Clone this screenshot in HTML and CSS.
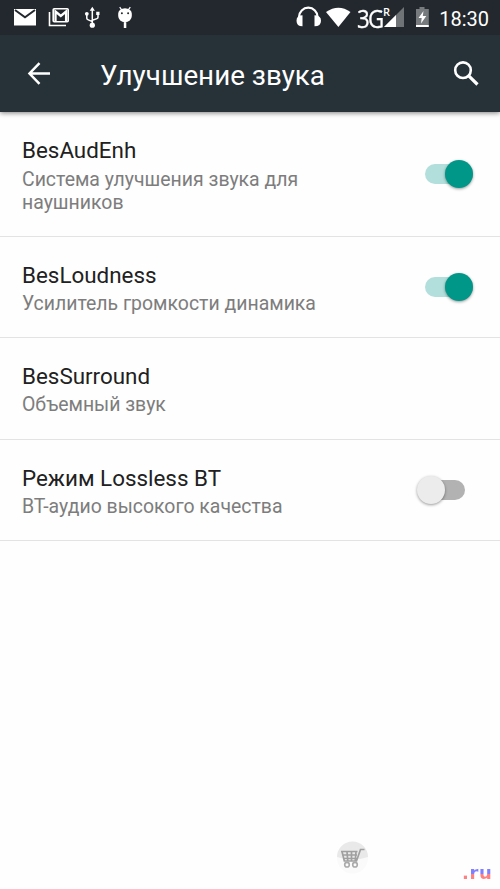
FILE: index.html
```html
<!DOCTYPE html>
<html lang="ru">
<head>
<meta charset="utf-8">
<title>Улучшение звука</title>
<link rel="stylesheet" href="styles.css">
</head>
<body>
<div class="status">
  <div class="notifications">
    <svg width="22" height="35" viewBox="14 0 22 35"><path fill="#fff" d="M14 9h22v16.500H14z"/><path d="M15 10l10 7.300 10-7.300" fill="none" stroke="#22282d" stroke-width="2"/></svg>
    <svg width="22" height="35" viewBox="48 0 22 35"><path d="M49.500 12v13.500H66" fill="none" stroke="#fff" stroke-width="1.600"/><rect x="53.200" y="8.800" width="15" height="13" rx="1" fill="none" stroke="#fff" stroke-width="1.600"/><path d="M55.500 21.500v-10l5.300 4.500 5.300-4.500v10" fill="none" stroke="#fff" stroke-width="2.300"/></svg>
    <svg width="16" height="35" viewBox="84 0 16 35"><path d="M92.300 9v16M86.800 14v4.300q0 1 1 1.300l4.500 2M98 13.500v3.800q0 1-1 1.300l-4.700 1.600" fill="none" stroke="#fff" stroke-width="1.500"/><path d="M92.300 6.800l2.600 4h-5.200zM96.200 11.800h3.300v3.300h-3.300z" fill="#fff"/><circle cx="86.800" cy="13.800" r="1.900" fill="#fff"/><circle cx="92.300" cy="25.200" r="2.600" fill="#fff"/></svg>
    <svg width="16" height="35" viewBox="117 0 16 35"><path d="M118.200 13.500a6.800 5.200 0 0 1 13.600 0v2.500a6.800 6.200 0 0 1-13.600 0zM123.800 22h2.500v6h-2.500z" fill="#fff"/><path d="M119.700 7.200l2.200 3M130.300 7.200l-2.200 3" stroke="#fff" stroke-width="1.200"/><circle cx="121.900" cy="13.300" r="1" fill="#22282d"/><circle cx="128.100" cy="13.300" r="1" fill="#22282d"/></svg>
  </div>
  <div class="system">
    <svg width="26" height="35" viewBox="296 0 26 35"><path d="M299 17.500v-.500a9.300 9.300 0 0 1 18.600 0v.5" fill="none" stroke="#fff" stroke-width="2.200"/><path d="M302.500 15.200v11q-6 0-6-5.500t6-5.500zM314.500 15.200v11q6.500 0 6.500-5.500t-6.500-5.500z" fill="#fff"/></svg>
    <svg width="25" height="35" viewBox="326 0 25 35"><path d="M326 12q12.500-8.500 24.500 0L338.400 27z" fill="#fff"/></svg>
    <div class="network"><span class="generation">3G</span><span class="roaming">R</span></div>
    <svg class="signal" width="20" height="35" viewBox="385 0 20 35"><path d="M405 7v20h-20z" fill="#6f7376"/><path d="M397 15v12h-12z" fill="#fff"/></svg>
    <svg width="14" height="35" viewBox="416 0 14 35"><path d="M417 9h3.500V7h5v2h4.300v16H417z" fill="#777b7e"/><path d="M417 25h12.800v2H417zM424.500 11l-5 7h3.200l-.700 5.500 5.300-7.500h-3.500z" fill="#fff"/></svg>
    <time class="clock">18:30</time>
  </div>
</div>
<header class="appbar">
  <svg width="24" height="24" viewBox="27 62 24 24"><path d="M50 73.500H30M39.500 63.200L29.500 73.500l10 10.300" fill="none" stroke="#fff" stroke-width="2.500"/></svg>
  <h1>Улучшение звука</h1>
  <svg class="search" width="26" height="26" viewBox="453 60 26 26"><circle cx="463" cy="70.200" r="7.800" fill="none" stroke="#fff" stroke-width="2.600"/><path d="M468.500 75.700l9 8.800" fill="none" stroke="#fff" stroke-width="3.200"/></svg>
</header>
<main>
  <section class="row tall">
    <div class="label"><h2>BesAudEnh</h2><p>Система улучшения звука для наушников</p></div>
    <div class="switch on"><i></i></div>
  </section>
  <section class="row">
    <div class="label"><h2>BesLoudness</h2><p>Усилитель громкости динамика</p></div>
    <div class="switch on"><i></i></div>
  </section>
  <section class="row">
    <div class="label"><h2>BesSurround</h2><p>Объемный звук</p></div>
  </section>
  <section class="row">
    <div class="label"><h2>Режим Lossless BT</h2><p>ВТ-аудио высокого качества</p></div>
    <div class="switch"><i></i></div>
  </section>
</main>
<footer>
  <svg class="cart" width="34" height="34" viewBox="336 841 34 34"><circle cx="352.500" cy="858" r="15.500" fill="#fafafa"/><path d="M337 857a15.500 15.500 0 0 1 31 0q-15.500 5-31 0z" fill="#e9e9e9"/><path d="M341 851.500h16.500M342.500 855h14.500M343.500 858.500h13M342 851.500l2.300 9.500h12.200l4-11.500h4M347 852l.8 9M351.500 852v9M356 852l-.8 9" fill="none" stroke="#a0a0a0" stroke-width="1.700"/><circle cx="347" cy="864.700" r="2.300" fill="#fafafa" stroke="#aaa" stroke-width="1.600"/><circle cx="355" cy="864.700" r="2.300" fill="#fafafa" stroke="#aaa" stroke-width="1.600"/></svg>
  <span class="domain">.ru</span>
</footer>
</body>
</html>
```

FILE: styles.css
```css
* { box-sizing: border-box; }
body {
  margin: 0;
  height: 889px;
  display: flex;
  flex-direction: column;
  overflow: hidden;
  background: #fefefe;
  color: #212121;
  font-family: Roboto, sans-serif;
}
svg { display: block; flex: none; }
h1, h2, p { margin: 0; font-weight: 400; }
.status {
  position: relative;
  z-index: 1;
  display: flex;
  justify-content: space-between;
  flex: none;
  height: 35px;
  padding: 0 11px 0 14px;
  background: #22282d;
  color: #fff;
}
.notifications { display: flex; }
.notifications svg:nth-child(2) { margin-left: 12px; }
.notifications svg:nth-child(3) { margin-left: 14px; }
.notifications svg:nth-child(4) { margin-left: 17px; }
.system { display: flex; width: 193px; }
.system svg:nth-child(2) { margin-left: 4px; }
.network { display: flex; width: 34px; margin-left: 6px; white-space: nowrap; }
.generation {
  width: 26px;
  font: 25px/36px "Open Sans", sans-serif;
  letter-spacing: -1.8px;
  transform: scaleX(.89);
  transform-origin: left;
  -webkit-text-stroke: .3px #fff;
}
.roaming { font: 600 11px/23px "Open Sans", sans-serif; }
.signal { margin-left: -6px; }
.signal + svg { margin-left: 11px; }
.clock { margin-left: 10px; font-size: 20px; line-height: 38px; }
.appbar {
  display: flex;
  align-items: center;
  flex: none;
  height: 77px;
  padding: 0 21px 0 27px;
  background: #263238;
  color: #fff;
  box-shadow: 0 1px 5px rgba(0, 0, 0, .5);
}
.appbar h1 { margin: 4px auto 0 49px; font-size: 27.8px; line-height: 36px; }
.search { margin-top: -1px; }
.row {
  display: flex;
  justify-content: space-between;
  height: 101.300px;
  padding: 25px 23px 0 22px;
  border-bottom: 1px solid #e3e3e3;
}
.row.tall { height: 125px; }
.label { width: 310px; }
.row h2 { font-size: 22.4px; line-height: 27px; }
.row p { margin-top: 3px; color: #7d7d7d; font-size: 19.45px; line-height: 23px; }
.tall p { margin-top: 4px; }
.switch {
  display: flex;
  align-items: center;
  width: 48px;
  height: 20px;
  margin: 15px 12px 0 0;
  border-radius: 10px;
  background: linear-gradient(#b2b2b2, #b2b2b2) right / 28px 20px no-repeat;
}
.switch i {
  width: 28px;
  height: 28px;
  border-radius: 50%;
  background: #ececec;
  box-shadow: 0 1px 3px rgba(0, 0, 0, .4);
}
.switch.on { justify-content: flex-end; margin-right: 4px; background: #b2dfdb; }
.switch.on i { background: #009688; }
.tall .switch { margin-top: 27px; }
footer {
  display: flex;
  align-items: flex-end;
  justify-content: space-between;
  margin-top: auto;
  padding: 0 8px 7px 336px;
}
.cart { margin-bottom: 7px; }
.domain {
  width: 30px;
  height: 20px;
  font: bold 18px/22px "DejaVu Sans", sans-serif;
  letter-spacing: .6px;
  color: transparent;
  background: linear-gradient(#8080ff 60%, #ff8080 60%);
  -webkit-background-clip: text;
  background-clip: text;
}
```
